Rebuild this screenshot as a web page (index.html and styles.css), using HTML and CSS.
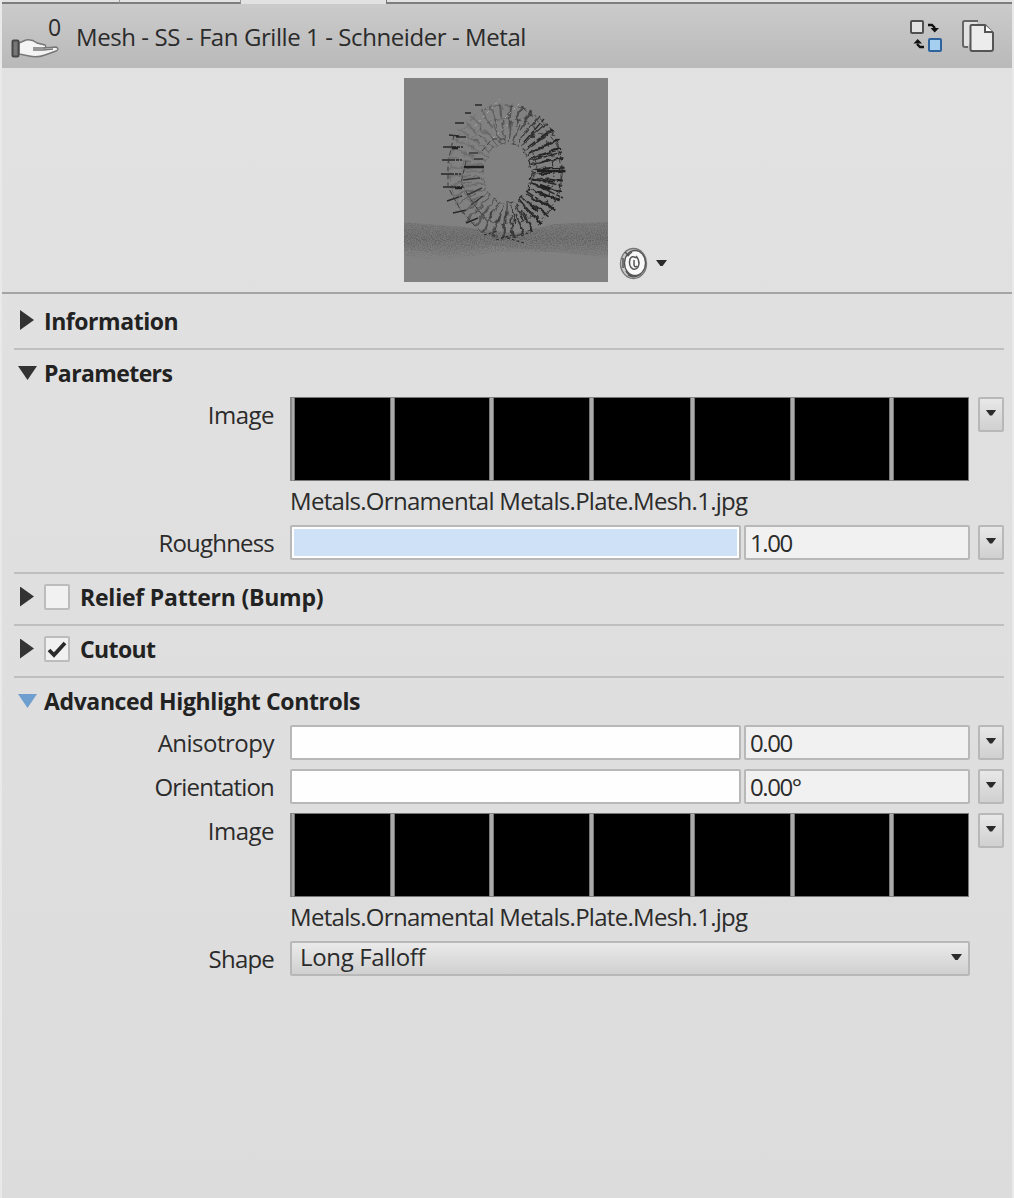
FILE: index.html
```html
<!DOCTYPE html>
<html lang="en">
<head>
<meta charset="utf-8">
<title>Material Editor</title>
<link rel="stylesheet" href="styles.css">
</head>
<body>
<main class="panel">
  <div class="tabs"><span class="tab tab-a"></span><span class="tab tab-b"></span><span class="tab active"></span><span class="tab-rest"></span></div>
  <header class="bar">
    <div class="usage">
      <svg class="hand" width="50" height="22" viewBox="0 0 50 22"><path d="M8 5 L15 2 Q21 1 26 5 L34 7 Q36 9 33 10 L45 9 Q49 11 45 13 L34 17 Q26 20 18 18 L8 16Z" fill="#f4f4f4" stroke="#777" stroke-width="1.4"/><path d="M22 10 H34 M22 12 H32 L42 11" fill="none" stroke="#777" stroke-width="1.3"/><rect x="1.5" y="2.500" width="6" height="16" rx="1" fill="#777" stroke="#484848" stroke-width="2"/></svg>
      <span class="count">0</span>
    </div>
    <h1 class="title">Mesh - SS - Fan Grille 1 - Schneider - Metal</h1>
    <svg class="swap" width="34" height="34" viewBox="0 0 34 34"><rect x="2" y="2" width="12" height="12" rx="1" fill="#e2e2e2" stroke="#505050" stroke-width="2"/><rect x="20" y="20" width="12" height="12" rx="1" fill="#a5cfee" stroke="#2f639d" stroke-width="2"/><path d="M19 6 H23 L26 9 M15 28 H11 L8 25" fill="none" stroke="#111" stroke-width="2.400"/><path d="M21.500 9 H30 L25.700 13.500Z M4.500 24.500 H13 L8.700 20Z" fill="#111"/></svg>
    <svg class="copy" width="34" height="34" viewBox="0 0 34 34"><path d="M17 2 H3.500 Q2 2 2 3.500 V26 Q2 28 4 28 H7" fill="#e2e2e2" stroke="#666" stroke-width="2"/><path d="M10.500 6 H24 L32 14 V30 Q32 32 30 32 H11 Q9.500 32 9.500 30 V7 Q9.500 6 10.500 6Z" fill="#ececec" stroke="#555" stroke-width="2"/><path d="M24 6 V13 H32" fill="#fff" stroke="#555" stroke-width="2"/></svg>
  </header>

  <section class="preview">
    <svg class="render" width="204" height="204" viewBox="0 0 204 204">
      <defs>
        <filter id="grain" x="0" y="0" width="1" height="1" color-interpolation-filters="sRGB"><feTurbulence type="fractalNoise" baseFrequency=".8" numOctaves="2" seed="4"/><feColorMatrix values="0 0 0 0 .36  0 0 0 0 .36  0 0 0 0 .36  0 4 0 0 -1.700"/><feComposite in2="SourceGraphic" operator="in"/></filter>
        <filter id="wobble"><feTurbulence type="fractalNoise" baseFrequency=".12" numOctaves="2" seed="8"/><feDisplacementMap in="SourceGraphic" scale="7" xChannelSelector="R" yChannelSelector="G"/></filter>
        <linearGradient id="shade" x1="0" y1=".2" x2="1" y2=".5"><stop offset="0" stop-color="#333" stop-opacity=".15"/><stop offset=".5" stop-color="#333" stop-opacity=".65"/><stop offset="1" stop-color="#222"/></linearGradient>
        <linearGradient id="fade" x1="0" y1="0" x2="0" y2="1"><stop offset="0" stop-color="#666" stop-opacity=".5"/><stop offset=".45" stop-color="#666"/><stop offset="1" stop-color="#666" stop-opacity="0"/></linearGradient>
      </defs>
      <rect width="204" height="204" fill="#818181"/>
      <path d="M0 145 L60 149 L110 155 L150 146 L204 144 V180 L150 174 L90 168 L40 178 L0 170Z" fill="url(#fade)" opacity=".45"/>
      <path d="M0 144 L60 149 L110 156 L150 146 L204 144 V180 L150 174 L90 174 L40 184 L0 178Z" fill="url(#fade)" filter="url(#grain)" opacity=".8"/>
      <g filter="url(#wobble)" fill="none" stroke="url(#shade)">
        <ellipse cx="102" cy="93" rx="47" ry="56" stroke-width="23" stroke-dasharray="1.900 6.300"/>
        <ellipse cx="104" cy="95" rx="34" ry="41" stroke-width="20" stroke-dasharray="1.600 5"/>
        <ellipse cx="102" cy="93" rx="56" ry="66" stroke-width="1" stroke-dasharray="9 4"/>
        <ellipse cx="104" cy="93" rx="46" ry="53" stroke-width="1" stroke-dasharray="6 4"/>
        <ellipse cx="103" cy="95" rx="24" ry="30" stroke-width="1.200" stroke-dasharray="7 5"/>
      </g>
      <g fill="none" stroke="#272727" stroke-width="1.400">
        <path d="M71 27h7M61 35h6M51 45h9M45 57l10 1M52 59h10M39 69h20M38 82h20M37 96h20M39 109h20M43 123l15-5M49 135l13-3M62 145l12-5" stroke-dasharray="13 1 3 1"/>
        <path d="M65 75h9M70 81h9M59 102l17-2M63 117l15-7M67 127l12-9" opacity=".8"/>
        <path d="M120 64l20-23M124 69l24-18M125 75l29-13M129 82l29-8M128 101l31 7M128 105l31 15M122 113l25 17M115 121l17 20" stroke-dasharray="9 2 4 1"/>
        <path d="M80 157l14-4M92 162l16-5M103 160l17 5M117 158l12-5" stroke-width="1" stroke-dasharray="3 2"/>
      </g>
      <path d="M133 93h28M60 89h20M136 107l10 4M48 70h6M51 110h7" stroke="#202020" stroke-width="2.600"/>
      <path d="M71 48l25-27M89 60l15-13M101 40l16-16" stroke="#b5b5b5" stroke-width=".9" stroke-dasharray="2 4"/>
      <path d="M50 57l-6 28v24l12 22 15 17M62 83l-5 22 12 20 14 18M78 73l10-12h16M119 30l19 17 15 20 4 24v16l-7 18-12 16M128 72l5 16-7 20" fill="none" stroke="#3c3c3c" stroke-width="1" stroke-dasharray="5 3"/>
    </svg>
    <div class="shape-pick">
      <svg width="30" height="34" viewBox="0 0 30 34"><g fill="none" stroke="#555"><ellipse cx="14.500" cy="17.500" rx="13" ry="15" fill="#c9c9c9" stroke="#777" stroke-width="1.400"/><ellipse cx="16" cy="17" rx="10.500" ry="12.500" fill="#f8f8f8" stroke-width="1.300"/><path d="M17 12q-4-3-6 1-2 7 3 10 5 1 6-5 0-5-3-8M15 14v5q1 3 3 1" stroke-width="1.500"/><path d="M8 10l5-4M6 6l4 4M7 25q3 5 8 5M4 12v10M9 29q6 4 13-1" stroke-width="1.500"/></g></svg>
      <i class="caret"></i>
    </div>
  </section>

  <section class="group info">
    <h2 class="head"><i class="closed"></i>Information</h2>
  </section>

  <section class="group params">
    <h2 class="head"><i class="open"></i><span class="w-params">Parameters</span></h2>
    <div class="row tall"><span class="label">Image</span><div class="strip"><b></b><b></b><b></b><b></b><b></b><b></b><b></b></div><button class="drop"><i class="caret"></i></button></div>
    <div class="file">Metals.Ornamental Metals.Plate.Mesh.1.jpg</div>
    <div class="row"><span class="label narrow">Roughness</span><div class="slider"><div class="fill"></div></div><div class="value">1.00</div><button class="drop"><i class="caret"></i></button></div>
  </section>

  <section class="group">
    <h2 class="head"><i class="closed"></i><span class="box"></span><span class="w-relief">Relief Pattern (Bump)</span></h2>
  </section>

  <section class="group">
    <h2 class="head"><i class="closed"></i><span class="box"><svg width="22" height="22" viewBox="0 0 22 22"><path d="M3 12 L8 17 L19 5" fill="none" stroke="#2b2b2b" stroke-width="3.800"/></svg></span><span class="w-cutout">Cutout</span></h2>
  </section>

  <section class="group last">
    <h2 class="head"><i class="open blue"></i><span class="w-adv">Advanced Highlight Controls</span></h2>
    <div class="row spaced"><span class="label">Anisotropy</span><div class="slider"></div><div class="value">0.00</div><button class="drop"><i class="caret"></i></button></div>
    <div class="row spaced"><span class="label narrow">Orientation</span><div class="slider"></div><div class="value">0.00°</div><button class="drop"><i class="caret"></i></button></div>
    <div class="row tall"><span class="label">Image</span><div class="strip"><b></b><b></b><b></b><b></b><b></b><b></b><b></b></div><button class="drop"><i class="caret"></i></button></div>
    <div class="file">Metals.Ornamental Metals.Plate.Mesh.1.jpg</div>
    <div class="row"><span class="label narrow">Shape</span><div class="select">Long Falloff<i class="caret"></i></div></div>
  </section>
</main>
</body>
</html>
```
FILE: styles.css
```css
* { box-sizing: border-box; }
body { margin: 0; background: #e9e9e9; font-family: "Open Sans", "Noto Sans", sans-serif; font-size: 24px; letter-spacing: -0.5px; color: #2b2b2b; }
.panel { width: 1010px; height: 1198px; margin-left: 2px; overflow: hidden; background: linear-gradient(#e2e2e2, #dcdcdc); }
.tabs { height: 4px; display: flex; }
.tab { height: 4px; border-bottom: 2px solid #7d7d7d; border-right: 1px solid #999; }
.tab-a { width: 118px; }
.tab-b { width: 121px; }
.active { width: 146px; border-bottom: 0; border-color: #777; }
.tab-rest { flex: 1; border-bottom: 2px solid #7d7d7d; }
.bar { height: 64px; display: flex; align-items: center; padding: 0 17px 0 8px; background: linear-gradient(#cbcbcb, #b9b9b9); }
.usage { width: 67px; height: 64px; display: flex; padding-top: 34px; }
.hand { flex: none; margin-left: 1px; }
.count { font-size: 23px; line-height: 26px; margin: -24px 0 0 -13px; }
.title { flex: 1; margin: 0 0 0 -1px; font-size: 24px; font-weight: 400; line-height: 32px; padding-top: 1px; white-space: nowrap; letter-spacing: -0.42px; }
.swap { margin-right: 18px; }
.preview { height: 226px; padding: 10px 0 0 402px; display: flex; border-bottom: 2px solid #a4a4a4; }
.shape-pick { display: flex; align-items: center; height: 34px; margin: 168px 0 0 11px; gap: 7px; }
.caret { display: block; flex: none; width: 11px; height: 6px; background: #2b2b2b; clip-path: polygon(0 0, 100% 0, 60% 100%, 40% 100%); }
.group { margin: 0 8px 0 12px; border-bottom: 2px solid #bfbfbf; }
.last { border: 0; }
.head { display: flex; align-items: center; height: 50px; margin: 0; padding: 0 0 4px; font-size: 23px; font-weight: 700; line-height: 32px; color: #222; letter-spacing: -0.6px; white-space: nowrap; }
.info .head { height: 54px; padding: 0 0 1px; letter-spacing: -0.45px; }
.params { padding-bottom: 12px; }
.params .head, .last .head { height: 47px; padding: 0 0 1px; }
.w-relief { letter-spacing: -0.22px; }
.w-adv { letter-spacing: -0.38px; }
.closed { width: 14px; height: 20px; margin: -1px 10px 0 6px; background: #333; clip-path: polygon(0 0, 100% 50%, 0 100%); }
.open { width: 19px; height: 14px; margin: 0 7px 0 4px; background: #333; clip-path: polygon(0 0, 100% 0, 50% 100%); }
.blue { background: #6f9fce; }
.box { width: 26px; height: 26px; margin-right: 10px; border: 2px solid #bcbcbc; border-radius: 2px; background: #f1f1f1; }
.box svg { display: block; }
.row { display: flex; height: 35px; }
.tall { height: 84px; }
.spaced { margin-bottom: 9px; }
.label { width: 260px; margin-right: 16px; text-align: right; line-height: 36px; }
.narrow { letter-spacing: -0.8px; }
.strip { width: 679px; display: grid; grid-template-columns: 95px 94px 95px 96px 95px 94px 74px; gap: 5px; padding: 1px 1px 1px 4px; border-left: 1px solid #888; background: #aaa; margin-right: 9px; box-shadow: inset 0 0 0 1px #888; }
.strip b { background: #000; outline: 1px solid #777; }
.file { height: 44px; line-height: 40px; padding-left: 276px; white-space: nowrap; letter-spacing: -0.7px; }
.slider { width: 451px; margin-right: 3px; border: 2px solid #b8b8b8; border-radius: 2px; background: #fefefe; padding: 2px; }
.fill { height: 27px; background: #cfe1f6; }
.value { width: 226px; border: 2px solid #b8b8b8; border-radius: 2px; background: #f1f1f1; padding-left: 4px; line-height: 31px; margin-right: 8px; letter-spacing: -1.4px; }
.drop { width: 26px; height: 35px; padding: 0 0 4px; border: 2px solid #b8b8b8; border-radius: 2px; background: linear-gradient(#e8e8e8, #d0d0d0); display: flex; align-items: center; justify-content: center; }
.select { width: 680px; height: 35px; display: flex; align-items: center; justify-content: space-between; padding: 0 6px 3px 8px; border: 2px solid #b8b8b8; border-radius: 2px; background: linear-gradient(#eaeaea, #d0d0d0); line-height: 30px; letter-spacing: -0.35px; }
```
